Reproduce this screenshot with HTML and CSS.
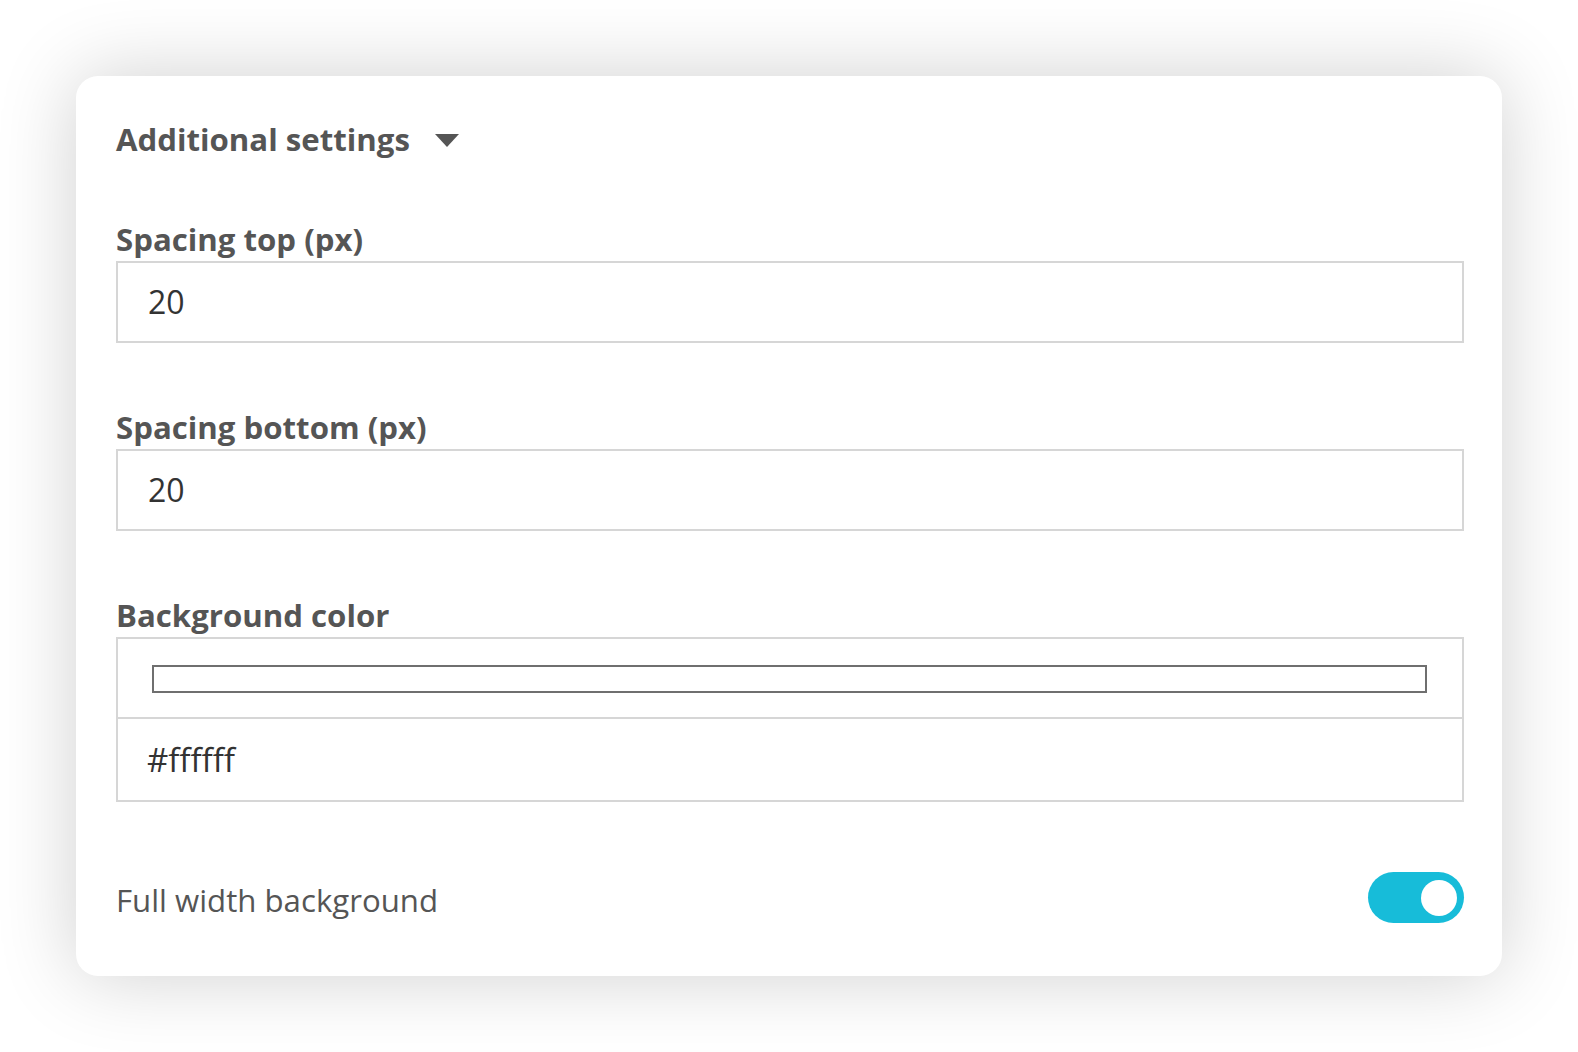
FILE: index.html
```html
<!DOCTYPE html>
<html lang="en">
<head>
<meta charset="utf-8">
<title>Additional settings</title>
<link rel="stylesheet" href="styles.css">
</head>
<body>
<div class="card">
  <div class="heading">
    <span>Additional settings</span>
    <svg class="caret" width="24" height="13" viewBox="0 0 24 13"><path d="M0 0 H24 L12 13 Z" fill="#555"/></svg>
  </div>

  <div class="field">
    <div class="label">Spacing top (px)</div>
    <div class="input">20</div>
  </div>

  <div class="field">
    <div class="label">Spacing bottom (px)</div>
    <div class="input">20</div>
  </div>

  <div class="field">
    <div class="label">Background color</div>
    <div class="colorbox">
      <div class="swatch-row"><div class="swatch"></div></div>
      <div class="hex">#ffffff</div>
    </div>
  </div>

  <div class="toggle-row">
    <span class="toggle-label">Full width background</span>
    <span class="toggle"><span class="knob"></span></span>
  </div>
</div>
</body>
</html>
```

FILE: styles.css
```css
html, body {
  margin: 0;
  padding: 0;
  background: #ffffff;
}
body {
  font-family: "Open Sans", "Noto Sans", sans-serif;
  padding: 76px 76px 0 76px;
  box-sizing: border-box;
  min-height: 1052px;
}
.card {
  box-sizing: border-box;
  width: 1426px;
  height: 900px;
  background: #fff;
  border-radius: 22px;
  box-shadow: 0 0 80px rgba(0, 0, 0, 0.19);
  padding: 43px 38px 0 40px;
  color: #555;
}
.heading {
  display: flex;
  align-items: center;
  gap: 25px;
  font-size: 31.2px;
  font-weight: 700;
  line-height: 40px;
  height: 40px;
}
.caret {
  display: block;
  margin-top: 2px;
}
.field {
  margin-top: 60px;
}
.field + .field {
  margin-top: 64px;
}
.label {
  font-size: 31.2px;
  font-weight: 700;
  line-height: 40px;
  margin-bottom: 2px;
}
.input {
  box-sizing: border-box;
  height: 82px;
  border: 2px solid #d6d6d6;
  padding-left: 30px;
  font-size: 32px;
  line-height: 78px;
  color: #333;
}
.colorbox {
  box-sizing: border-box;
  border: 2px solid #d6d6d6;
}
.swatch-row {
  height: 80px;
  border-bottom: 2px solid #d6d6d6;
  padding: 26px 35px 0 34px;
  box-sizing: border-box;
}
.swatch {
  box-sizing: border-box;
  height: 28px;
  border: 2px solid #6f6f6f;
  background: #fff;
}
.hex {
  height: 81px;
  padding-left: 29px;
  font-size: 33px;
  line-height: 82px;
  color: #333;
}
.toggle-row {
  display: flex;
  justify-content: space-between;
  align-items: center;
  margin-top: 70px;
}
.toggle-label {
  font-size: 31.2px;
  line-height: 40px;
  color: #555;
  margin-top: 4px;
}
.toggle {
  position: relative;
  width: 96px;
  height: 51px;
  border-radius: 26px;
  background: #17bcd9;
  display: block;
}
.knob {
  position: absolute;
  right: 7px;
  top: 8px;
  width: 36px;
  height: 36px;
  border-radius: 50%;
  background: #fff;
}
```
